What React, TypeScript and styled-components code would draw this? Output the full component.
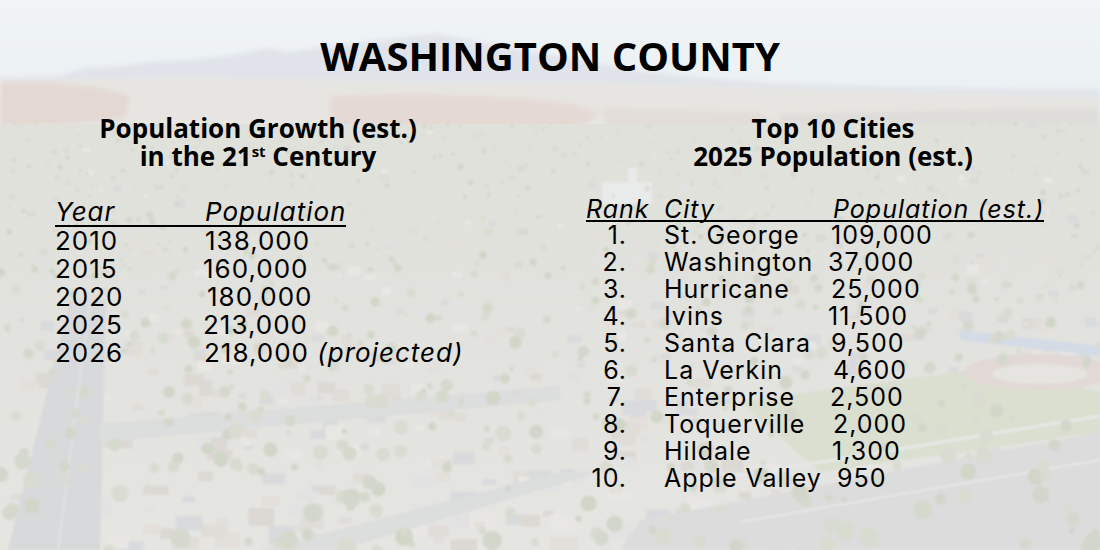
import React, { useMemo } from "react";
import styled, { createGlobalStyle } from "styled-components";

const GlobalStyle = createGlobalStyle`
  html, body { margin: 0; padding: 0; }
  body { width: 1100px; height: 550px; overflow: hidden; background: #e4e5e1; }
  #root { width: 1100px; height: 550px; }
`;

const Page = styled.div`
  position: relative;
  width: 1100px;
  height: 550px;
  overflow: hidden;
  color: #000;
`;

const Backdrop = styled.svg`
  position: absolute;
  inset: 0;
  width: 100%;
  height: 100%;
  z-index: 0;
`;

const Content = styled.main`
  position: relative;
  z-index: 1;
  display: flex;
  flex-direction: column;
  padding-top: 36px;
`;

const Title = styled.h1`
  margin: 0;
  font-family: "Open Sans", "Noto Sans", sans-serif;
  font-weight: 700;
  font-size: 40px;
  line-height: 40px;
  text-align: center;
`;

const Columns = styled.div`
  display: grid;
  grid-template-columns: 516px 534px;
  column-gap: 50px;
  margin-top: 38px;
`;

const Column = styled.section`
  display: flex;
  flex-direction: column;
`;

const Heading = styled.h2`
  margin: 0;
  font-family: "Open Sans", "Noto Sans", sans-serif;
  font-weight: 700;
  font-size: 26px;
  line-height: 28px;
  text-align: center;
`;

const Sup = styled.sup`
  font-size: 15px;
  line-height: 0;
  vertical-align: 9px;
`;

const Table = styled.div<{ $inset: number; $size: number }>`
  display: flex;
  flex-direction: column;
  align-items: flex-start;
  margin-top: 28px;
  margin-left: ${(p) => p.$inset}px;
  font-family: Inter, "Noto Sans", sans-serif;
  font-size: ${(p) => p.$size}px;
  letter-spacing: 1px;
  font-weight: 400;
`;

const HeaderRow = styled.div<{ $cols: string; $lh: number }>`
  display: grid;
  grid-template-columns: ${(p) => p.$cols};
  width: max-content;
  font-style: italic;
  line-height: ${(p) => p.$lh}px;
  border-bottom: 2px solid #000;
  white-space: nowrap;
`;

const Row = styled.div<{ $cols: string; $lh: number }>`
  display: grid;
  grid-template-columns: ${(p) => p.$cols};
  line-height: ${(p) => p.$lh}px;
  white-space: nowrap;
`;

const Cell = styled.span<{ $shift?: number }>`
  margin-left: ${(p) => p.$shift ?? 0}px;
`;

const RankCell = styled.span`
  text-align: right;
  padding-right: 37px;
`;

const Note = styled.em`
  font-style: italic;
`;

const growth: [string, string, number, string?][] = [
  ["2010", "138,000", 0],
  ["2015", "160,000", -2],
  ["2020", "180,000", 2],
  ["2025", "213,000", -2],
  ["2026", "218,000", -1, "(projected)"],
];

const cities: [string, string, string, number][] = [
  ["1.", "St. George", "109,000", 1],
  ["2.", "Washington", "37,000", -2],
  ["3.", "Hurricane", "25,000", 1],
  ["4.", "Ivins", "11,500", -2],
  ["5.", "Santa Clara", "9,500", 1],
  ["6.", "La Verkin", "4,600", 3],
  ["7.", "Enterprise", "2,500", 0],
  ["8.", "Toquerville", "2,000", 3],
  ["9.", "Hildale", "1,300", 2],
  ["10.", "Apple Valley", "950", 7],
];

function makeRng(seed: number) {
  let s = seed;
  return () => {
    s = (s + 0x6d2b79f5) | 0;
    let t = Math.imul(s ^ (s >>> 15), 1 | s);
    t = (t + Math.imul(t ^ (t >>> 7), 61 | t)) ^ t;
    return ((t ^ (t >>> 14)) >>> 0) / 4294967296;
  };
}

const treeColors = ["#d5d9cd", "#d8dbd0", "#d1d6c8", "#dadcd2", "#d3d7cb"];
const houseColors = ["#e0dcd8", "#e2e2e2", "#dcd8d4", "#e8e7e4", "#d9dadc", "#e3dfdb"];

function Landscape() {
  const shapes = useMemo(() => {
    const r = makeRng(17);
    const houses: React.ReactElement[] = [];
    const trees: React.ReactElement[] = [];
    for (let i = 0; i < 700; i++) {
      const y = 122 + Math.pow(r(), 1.2) * 428;
      const x = r() * 1100;
      const scale = 0.3 + ((y - 122) / 428) * 1.2;
      const w = (6 + r() * 14) * scale;
      const h = w * (0.45 + r() * 0.35);
      houses.push(
        <rect key={"h" + i} x={x} y={y} width={w} height={h} fill={houseColors[Math.floor(r() * houseColors.length)]} />
      );
    }
    for (let i = 0; i < 650; i++) {
      const y = 122 + Math.pow(r(), 1.5) * 428;
      const x = r() * 1100;
      const scale = 0.3 + ((y - 122) / 428) * 1.3;
      const rad = (2 + r() * 4.5) * scale;
      trees.push(
        <circle key={"t" + i} cx={x} cy={y} r={rad} fill={treeColors[Math.floor(r() * treeColors.length)]} />
      );
    }
    return { houses, trees };
  }, []);

  return (
    <Backdrop viewBox="0 0 1100 550" preserveAspectRatio="none" aria-hidden="true">
      <defs>
        <linearGradient id="sky" x1="0" y1="0" x2="0" y2="1">
          <stop offset="0" stopColor="#f0f4f7" />
          <stop offset="1" stopColor="#eaeff2" />
        </linearGradient>
        <linearGradient id="city" x1="0" y1="0" x2="0" y2="1">
          <stop offset="0" stopColor="#dfe1da" />
          <stop offset="0.5" stopColor="#e2e2de" />
          <stop offset="1" stopColor="#e5e5e2" />
        </linearGradient>
        <filter id="soft" x="0" y="0" width="1" height="1">
          <feGaussianBlur stdDeviation="0.9" />
        </filter>
        <filter id="haze" x="-0.05" y="-0.2" width="1.1" height="1.4">
          <feGaussianBlur stdDeviation="2.5" />
        </filter>
      </defs>
      <rect x="0" y="0" width="1100" height="130" fill="url(#sky)" />
      <g filter="url(#haze)">
        <path
          d="M60 76 L85 68 L120 66 L150 62 L190 60 L230 56 L266 48 L290 52 L330 46 L380 40 L435 34 L470 40 L520 50 L580 60 L631 70 L700 78 L772 83 L850 86 L950 88 L1100 90 L1100 110 L0 110 L0 78 Z"
          fill="#e0e4ea"
        />
        <path d="M0 80 L200 78 L420 82 L640 84 L820 90 L1100 98 L1100 125 L0 125 Z" fill="#e7e5e1" />
        <path d="M0 82 L40 82 L100 88 L130 96 L125 118 L60 126 L0 126 Z" fill="#e4d8d2" />
        <path d="M330 96 L420 94 L520 98 L570 104 L600 112 L570 138 L450 140 L330 134 Z" fill="#e5d9d4" />
        <path d="M600 108 L760 112 L780 128 L610 132 Z" fill="#e3ddd9" />
        <path d="M780 114 L960 110 L1100 108 L1100 136 L780 136 Z" fill="#dfddd9" />
      </g>
      <rect x="0" y="124" width="1100" height="426" fill="url(#city)" />
      <g filter="url(#soft)">
        {shapes.houses}
        <polygon points="8,550 100,550 106,300 70,300" fill="#d8d9da" />
        <line x1="58" y1="550" x2="90" y2="300" stroke="#e5e6e6" strokeWidth="1.2" />
        <polygon points="100,424 560,386 560,400 100,442" fill="#dcdddd" />
        <polygon points="260,550 560,472 600,472 340,550" fill="#dcdddd" />
        <polygon points="640,520 1100,432 1100,550 620,550" fill="#dcdcdd" />
        <polygon points="740,402 1000,366 1100,392 1100,432 820,472" fill="#dadfd0" />
        <ellipse cx="1040" cy="372" rx="75" ry="18" fill="#e2d8d5" />
        <ellipse cx="1040" cy="374" rx="48" ry="10" fill="#e6e4e0" />
        <polygon points="960,330 1100,346 1100,356 960,340" fill="#d3dbe6" />
        <line x1="700" y1="482" x2="1100" y2="416" stroke="#e7e8e8" strokeWidth="3" />
        <line x1="740" y1="522" x2="1100" y2="460" stroke="#e7e8e8" strokeWidth="2" />
        <rect x="602" y="182" width="50" height="22" fill="#e9eaea" />
        <rect x="628" y="168" width="9" height="15" fill="#e9eaea" />
        {shapes.trees}
      </g>
    </Backdrop>
  );
}

export default function App() {
  const leftCols = "150px auto";
  const rightCols = "78px 166px auto";
  return (
    <>
      <GlobalStyle />
      <Page>
        <Landscape />
        <Content>
          <Title>WASHINGTON COUNTY</Title>
          <Columns>
            <Column>
              <Heading>
                Population Growth (est.)
                <br />
                in the 21<Sup>st</Sup> Century
              </Heading>
              <Table $inset={55} $size={26}>
                <HeaderRow $cols={leftCols} $lh={27}>
                  <span>Year</span>
                  <span>Population</span>
                </HeaderRow>
                {growth.map(([year, pop, shift, note]) => (
                  <Row key={year} $cols={leftCols} $lh={28}>
                    <span>{year}</span>
                    <Cell $shift={shift}>
                      {pop}
                      {note ? (
                        <>
                          {" "}
                          <Note>{note}</Note>
                        </>
                      ) : null}
                    </Cell>
                  </Row>
                ))}
              </Table>
            </Column>
            <Column>
              <Heading>
                Top 10 Cities
                <br />
                2025 Population (est.)
              </Heading>
              <Table $inset={20} $size={25}>
                <HeaderRow $cols={rightCols} $lh={22}>
                  <span>Rank</span>
                  <span>City</span>
                  <Cell $shift={3}>Population (est.)</Cell>
                </HeaderRow>
                {cities.map(([rank, city, pop, shift]) => (
                  <Row key={rank} $cols={rightCols} $lh={27}>
                    <RankCell>{rank}</RankCell>
                    <span>{city}</span>
                    <Cell $shift={shift}>{pop}</Cell>
                  </Row>
                ))}
              </Table>
            </Column>
          </Columns>
        </Content>
      </Page>
    </>
  );
}
